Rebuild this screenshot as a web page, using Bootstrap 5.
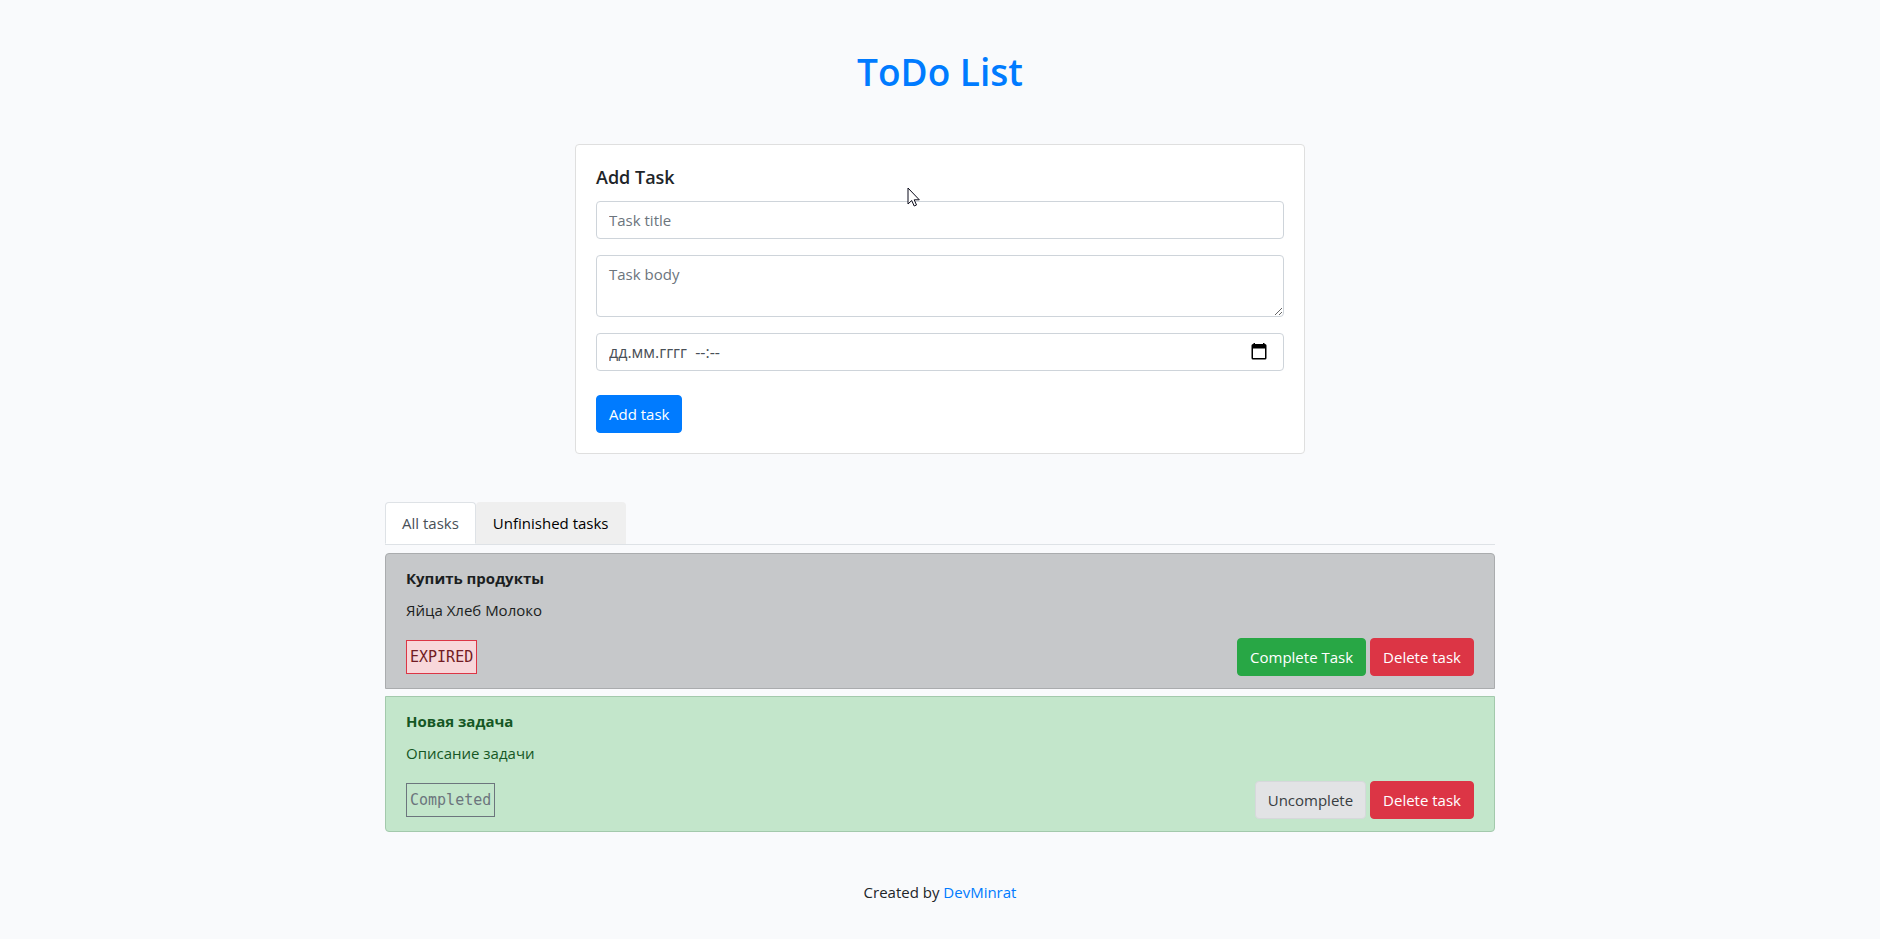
<!DOCTYPE html>
<html lang="en">
<head>
<meta charset="utf-8">
<meta name="viewport" content="width=device-width, initial-scale=1">
<title>ToDo List</title>
<link href="https://cdn.jsdelivr.net/npm/bootstrap@5.3.0/dist/css/bootstrap.min.css" rel="stylesheet">
<style>
  body { background: #f9fafc; color: #212529; font-family: "Segoe UI", "Open Sans", "Noto Sans", sans-serif; font-size: 15px; line-height: 24px; }
  .todo-page { max-width: 1140px; padding: 0 15px; }
  .todo-head { color: #007bff; font-size: 37px; line-height: 48px; font-weight: 600; }
  .add-card { width: 66.6667%; max-width: 730px; border: 1px solid #dfdfdf; border-radius: 4px; }
  .add-card .card-body { padding: 20px; }
  .add-card .card-title { font-size: 18px; line-height: 24px; font-weight: 600; margin-bottom: 12px; }
  .form-control { font-size: 15px; line-height: 24px; padding: 6px 12px; border: 1px solid #ced4da; border-radius: 4px; color: #495057; }
  .form-control::placeholder { color: #6c757d; }
  textarea.form-control { height: 62px; min-height: 62px; }
  .due-field input { border: 0; padding: 0; outline: 0; font-size: 16px; color: #495057; background: none; height: 24px; min-width: 0; }
  .due-field input::placeholder { color: #495057; opacity: 1; }
  .due-field button { border: 0; padding: 0; background: none; width: 24px; height: 24px; }
  .due-field svg { display: block; margin: auto; }
  .pointer { position: absolute; left: 331px; top: 42px; pointer-events: none; }
  .btn { font-size: 15px; line-height: 24px; padding: 6px 12px; border-radius: 4px; }
  .btn-primary { background: #007bff; border-color: #007bff; }
  .btn-success { background: #28a745; border-color: #28a745; }
  .btn-danger { background: #dc3545; border-color: #dc3545; }
  .btn-undo, .btn-undo:hover { background: #e2e3e5; border-color: #d6d8db; color: #383d41; }
  .nav-tabs { border-bottom: 1px solid #dee2e6; }
  .nav-tabs .nav-link { margin-bottom: 0; padding: 8px 16px; background: #efefef; color: #000; border-radius: 4px 4px 0 0; }
  .nav-tabs .nav-link.active { background: #fff; color: #495057; border-color: #dee2e6 #dee2e6 #fff; }
  .task-list { gap: 7px; }
  .task { padding: 12px 20px; border: 1px solid; }
  .task:first-child { border-radius: 4px 4px 0 0; }
  .task:last-child { border-radius: 0 0 4px 4px; }
  .task-open { background: #c6c8ca; border-color: #aaacae; color: #1b1e21; }
  .task-done { background: #c3e6cb; border-color: #a3c9ac; color: #155724; }
  .state { font-family: Consolas, "DejaVu Sans Mono", monospace; padding: 4px 3px; border: 1px solid #6c757d; color: #6c757d; }
  .state-expired { background: #f8d7da; border-color: #dc3545; color: #721c24; }
  .site-foot a { color: #007bff; text-decoration: none; }
</style>
</head>
<body>
<div class="container todo-page">
  <h1 class="todo-head text-center my-5">ToDo List</h1>

  <section class="card add-card mx-auto mb-5">
    <form class="card-body">
      <h5 class="card-title">Add Task</h5>
      <input type="text" class="form-control mb-3" placeholder="Task title" aria-label="Task title">
      <textarea class="form-control mb-3" rows="2" placeholder="Task body" aria-label="Task body"></textarea>
      <div class="form-control due-field d-flex mb-4">
        <input type="text" class="flex-grow-1" placeholder="дд.мм.гггг&nbsp; --:--" aria-label="Due date">
        <button type="button" aria-label="Pick a date">
          <svg width="16" height="20" viewBox="0 0 16 20"><path fill="#000" fill-rule="evenodd" d="M2.5 1H4v1h8V1h1.500v1H14a1.500 1.500 0 0 1 1.500 1.500V16A1.500 1.500 0 0 1 14 17.500H2A1.500 1.500 0 0 1 .5 16V3.500A1.500 1.500 0 0 1 2 2h.5zM2 6.500V16h12V6.500z"/></svg>
        </button>
      </div>
      <button type="button" class="btn btn-primary">Add task</button>
    </form>
    <svg class="pointer" width="14" height="22" viewBox="0 0 14 22" aria-hidden="true"><path d="M1 1v16l3.700-3.500 2.500 5.500 2.300-1-2.300-5.200h5.100z" fill="#fff" stroke="#0b0b1a" stroke-width="1"/></svg>
  </section>

  <ul class="nav nav-tabs mb-2" role="tablist">
    <li class="nav-item" role="presentation"><button class="nav-link active" type="button" role="tab" aria-selected="true">All tasks</button></li>
    <li class="nav-item" role="presentation"><button class="nav-link" type="button" role="tab" aria-selected="false">Unfinished tasks</button></li>
  </ul>

  <div class="task-list d-flex flex-column mb-5">
    <article class="task task-open">
      <div class="fw-bold mb-2">Купить продукты</div>
      <p class="mb-3">Яйца Хлеб Молоко</p>
      <div class="d-flex justify-content-between align-items-center">
        <span class="state state-expired">EXPIRED</span>
        <div class="d-flex gap-1">
          <button type="button" class="btn btn-success">Complete Task</button>
          <button type="button" class="btn btn-danger">Delete task</button>
        </div>
      </div>
    </article>
    <article class="task task-done">
      <div class="fw-bold mb-2">Новая задача</div>
      <p class="mb-3">Описание задачи</p>
      <div class="d-flex justify-content-between align-items-center">
        <span class="state">Completed</span>
        <div class="d-flex gap-1">
          <button type="button" class="btn btn-undo">Uncomplete</button>
          <button type="button" class="btn btn-danger">Delete task</button>
        </div>
      </div>
    </article>
  </div>

  <footer class="site-foot text-center">Created by <a href="#">DevMinrat</a></footer>
</div>
<script src="https://cdn.jsdelivr.net/npm/bootstrap@5.3.0/dist/js/bootstrap.bundle.min.js"></script>
</body>
</html>
